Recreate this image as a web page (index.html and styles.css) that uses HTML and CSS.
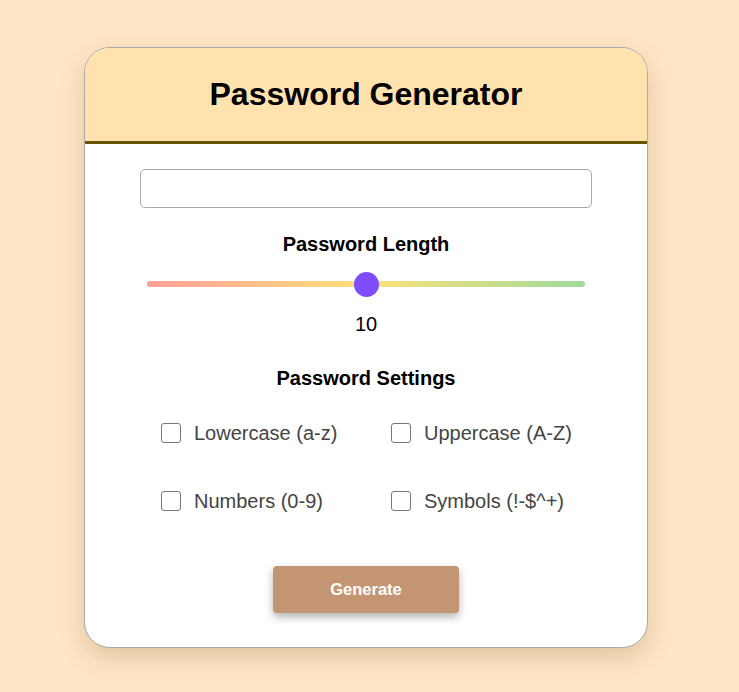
FILE: index.html
```html
<!DOCTYPE html>
<html>
<head>
<meta charset="utf-8">
<link rel="stylesheet" href="styles.css">
</head>
<body>
<div class="card">
  <div class="header"><h1>Password Generator</h1></div>
  <div class="content">
    <input class="output" type="text">
    <h2 class="label-title">Password Length</h2>
    <input class="slider" type="range" min="1" max="19" value="10">
    <div class="value">10</div>
    <h2 class="label-title settings">Password Settings</h2>
    <div class="options">
      <label class="opt"><input type="checkbox"><span>Lowercase (a-z)</span></label>
      <label class="opt"><input type="checkbox"><span>Uppercase (A-Z)</span></label>
      <label class="opt"><input type="checkbox"><span>Numbers (0-9)</span></label>
      <label class="opt"><input type="checkbox"><span>Symbols (!-$^+)</span></label>
    </div>
    <button class="generate">Generate</button>
  </div>
</div>
</body>
</html>
```
FILE: styles.css
```css
html, body {
  margin: 0;
  padding: 0;
}
body {
  background: #ffe6c6;
  font-family: "Liberation Sans", Arial, sans-serif;
  min-height: 692px;
  padding-top: 47px;
  box-sizing: border-box;
}
.card {
  width: 564px;
  margin-left: 84px;
  box-sizing: border-box;
  background: #fff;
  border: 1px solid #aaa;
  border-radius: 26px;
  overflow: hidden;
  box-shadow: 0 10px 25px rgba(120, 80, 30, 0.22);
}
.header {
  background: #ffe2ae;
  border-bottom: 3px solid #665600;
  height: 93px;
  display: flex;
  align-items: center;
  justify-content: center;
}
.header h1 {
  margin: 0;
  font-size: 32px;
  font-weight: bold;
  color: #000;
}
.content {
  display: flex;
  flex-direction: column;
  align-items: center;
  padding: 25px 0 34px;
}
.output {
  width: 452px;
  height: 39px;
  box-sizing: border-box;
  border: 1px solid #aaa;
  border-radius: 5px;
  margin: 0;
  outline: none;
}
.label-title {
  margin: 25px 0 0;
  font-size: 20px;
  line-height: 22px;
  font-weight: bold;
  color: #000;
}
.slider {
  -webkit-appearance: none;
  appearance: none;
  width: 438px;
  height: 6px;
  margin: 26px 0 0;
  border-radius: 3px;
  background: linear-gradient(to right, #ff9f98, #ffe17a 50%, #9edb98);
  outline: none;
}
.slider::-webkit-slider-thumb {
  -webkit-appearance: none;
  appearance: none;
  width: 25px;
  height: 25px;
  border-radius: 50%;
  background: #7f4dff;
  border: none;
}
.value {
  margin-top: 26px;
  font-size: 20px;
  line-height: 22px;
  color: #000;
}
.settings {
  margin-top: 32px;
}
.options {
  align-self: flex-start;
  margin-left: 76px;
  margin-top: 33px;
  display: grid;
  grid-template-columns: 230px 230px;
  row-gap: 46px;
}
.opt {
  display: flex;
  align-items: center;
  gap: 13px;
  font-size: 20px;
  line-height: 22px;
  color: #444;
}
.opt input {
  -webkit-appearance: none;
  appearance: none;
  width: 20px;
  height: 20px;
  margin: 0;
  box-sizing: border-box;
  border: 1.5px solid #767676;
  border-radius: 3px;
  background: #fff;
}
.generate {
  margin-top: 54px;
  width: 186px;
  height: 47px;
  border: none;
  border-radius: 4px;
  background: #c49572;
  color: #fff;
  font-family: "Liberation Sans", Arial, sans-serif;
  font-size: 16.5px;
  font-weight: bold;
  box-shadow: 0 4px 8px rgba(0, 0, 0, 0.3);
}
```
